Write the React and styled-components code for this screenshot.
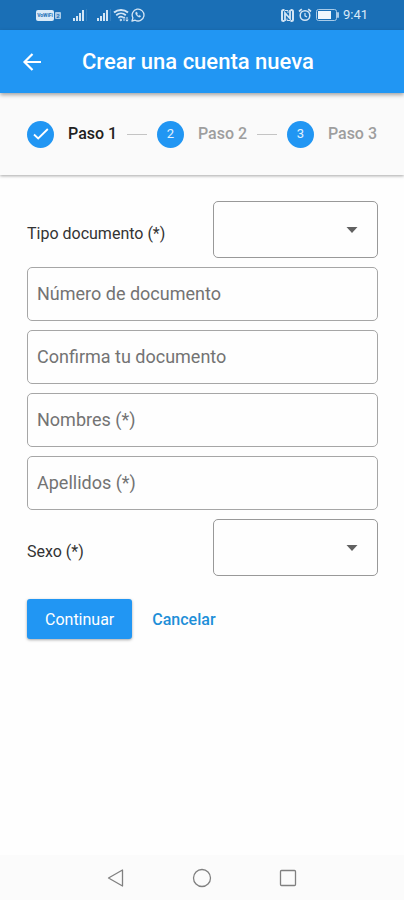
import React, { useState } from "react";
import styled, { createGlobalStyle } from "styled-components";

const steps = ["Paso 1", "Paso 2", "Paso 3"];

const fields = [
  { name: "documento", label: "Número de documento" },
  { name: "confirma", label: "Confirma tu documento" },
  { name: "nombres", label: "Nombres (*)" },
  { name: "apellidos", label: "Apellidos (*)" },
];

const Signal = () => (
  <svg width="14" height="12" viewBox="0 0 14 12" fill="#d3e5f5">
    <rect x="0" y="9" width="2" height="3" />
    <rect x="3" y="7" width="2" height="5" />
    <rect x="6" y="4" width="2" height="8" />
    <rect x="9" y="1" width="2" height="11" />
    <rect x="13" y="0" width="1" height="12" opacity="0.15" />
  </svg>
);

const Wifi = () => (
  <svg width="16" height="14" viewBox="0 0 16 14" fill="none" stroke="#d3e5f5">
    <path d="M1 4.5C5 1 11 1 15 4.5" strokeWidth="2" />
    <path d="M3.2 7.2C6 4.8 10 4.8 12.8 7.2" strokeWidth="1.8" />
    <path d="M5.4 9.8C7 8.4 8.6 8.4 10 9.4" strokeWidth="1.6" />
    <circle cx="7.8" cy="12" r="0.8" fill="#d3e5f5" />
    <path d="M11 13V9M9.8 10.2L11 8.8l1.2 1.4M14 9v4M12.8 11.8L14 13.2l1.2-1.4" />
  </svg>
);

const Whatsapp = () => (
  <svg width="14" height="14" viewBox="0 0 14 14" fill="none" stroke="#d3e5f5">
    <path
      d="M1 13l.9-3.1A5.9 5.9 0 1 1 4.2 12.2z"
      strokeWidth="1.3"
      strokeLinejoin="round"
    />
    <path
      d="M4.9 4.2c-.7.8-.2 2.2 1 3.5s2.7 1.9 3.5 1.1l.3-.7-1.3-.8-.7.6C6.9 7.5 6.4 7 6 6.2l.5-.7-.7-1.4z"
      fill="#d3e5f5"
      strokeWidth="0.4"
    />
  </svg>
);

const Nfc = () => (
  <svg width="13" height="13" viewBox="0 0 13 13" fill="none" stroke="#d3e5f5">
    <path d="M3.5 12h-1Q1 12 1 10.5v-8Q1 1 2.5 1h1" strokeWidth="2" />
    <path d="M9.5 1h1Q12 1 12 2.5v8Q12 12 10.500 12h-1" strokeWidth="2" />
    <path d="M4 12V4l5 5.5V1" strokeWidth="1.8" />
    <path d="M4 1.500h3V4M9 11.500H6V9.500" strokeWidth="1" />
  </svg>
);

const Alarm = () => (
  <svg width="14" height="14" viewBox="0 0 14 14" fill="none" stroke="#d3e5f5">
    <circle cx="7" cy="7.5" r="4.8" strokeWidth="1.5" />
    <path d="M7 5v2.8l2 1.2" strokeWidth="1.2" />
    <path d="M1 3.5L3.8 1.2M13 3.5L10.2 1.2" strokeWidth="1.7" />
  </svg>
);

const Battery = () => (
  <svg width="23" height="12" viewBox="0 0 23 12">
    <rect
      x="0.5"
      y="0.5"
      width="20"
      height="11"
      rx="2"
      fill="none"
      stroke="#a9cbe8"
    />
    <rect x="2" y="2" width="13" height="8" fill="#eef6fd" />
    <rect x="21" y="3" width="2" height="6" rx="1" fill="#a9cbe8" />
  </svg>
);

const SelectField = ({ id, label, options }) => {
  const [value, setValue] = useState("");

  return (
    <SelectRow>
      <Label htmlFor={id}>{label}</Label>
      <SelectBox>
        <Select id={id} value={value} onChange={(e) => setValue(e.target.value)}>
          <option value=""></option>
          {options.map((option) => (
            <option key={option}>{option}</option>
          ))}
        </Select>
        <Caret width="12" height="6" viewBox="0 0 12 6">
          <path d="M0.5 0h11L6 6z" fill="#616161" />
        </Caret>
      </SelectBox>
    </SelectRow>
  );
};

const App = () => {
  const [values, setValues] = useState({});

  const onChange = (e) => {
    setValues({ ...values, [e.target.name]: e.target.value });
  };

  return (
    <Page>
      <GlobalStyle />
      <StatusBar>
        <Carrier>
          <Volte>VoWiFi</Volte>
          <Sim>2</Sim>
        </Carrier>
        <Signals>
          <Signal />
          <Signal />
        </Signals>
        <Wifi />
        <Whatsapp />
        <StatusRight>
          <Nfc />
          <Alarm />
          <Battery />
          <Time>9:41</Time>
        </StatusRight>
      </StatusBar>

      <AppBar>
        <BackButton type="button" aria-label="Atrás">
          <svg width="20" height="20" viewBox="0 0 20 20" fill="none">
            <path
              d="M19 10H3M10.5 2L2.5 10l8 8"
              stroke="#fff"
              strokeWidth="2.2"
            />
          </svg>
        </BackButton>
        <Title>Crear una cuenta nueva</Title>
      </AppBar>

      <Stepper>
        {steps.map((step, i) => (
          <React.Fragment key={step}>
            {i > 0 && <Line />}
            <Step $active={i === 0}>
              <Circle>
                {i === 0 ? (
                  <svg width="16" height="12" viewBox="0 0 16 12" fill="none">
                    <path
                      d="M1 6.5L5.2 10.5L14.8 1"
                      stroke="#fff"
                      strokeWidth="1.8"
                    />
                  </svg>
                ) : (
                  i + 1
                )}
              </Circle>
              {step}
            </Step>
          </React.Fragment>
        ))}
      </Stepper>

      <Form onSubmit={(e) => e.preventDefault()}>
        <SelectField
          id="tipo"
          label="Tipo documento (*)"
          options={["DNI", "Pasaporte"]}
        />
        {fields.map(({ name, label }) => (
          <Input
            key={name}
            name={name}
            type="text"
            aria-label={label}
            placeholder={label}
            value={values[name] || ""}
            onChange={onChange}
          />
        ))}
        <SelectField
          id="sexo"
          label="Sexo (*)"
          options={["Femenino", "Masculino"]}
        />
        <Actions>
          <Button type="submit" $primary>
            Continuar
          </Button>
          <Button type="button">Cancelar</Button>
        </Actions>
      </Form>

      <NavBar>
        <NavButton type="button" aria-label="Volver">
          <svg width="18" height="20" viewBox="0 0 18 20">
            <path d="M15.5 2v16L1.5 10z" />
          </svg>
        </NavButton>
        <NavButton type="button" aria-label="Inicio">
          <svg width="20" height="20" viewBox="0 0 20 20">
            <circle cx="10" cy="10" r="8.5" />
          </svg>
        </NavButton>
        <NavButton type="button" aria-label="Recientes">
          <svg width="18" height="18" viewBox="0 0 18 18">
            <rect x="1.5" y="1.5" width="15" height="15" rx="1" />
          </svg>
        </NavButton>
      </NavBar>
    </Page>
  );
};

export default App;

const GlobalStyle = createGlobalStyle`
  * {
    box-sizing: border-box;
  }
  body {
    margin: 0;
    background: #fefefe;
    font-family: Roboto, sans-serif;
  }
  button, input, select {
    font-family: inherit;
  }
  svg {
    display: block;
    flex-shrink: 0;
  }
`;
const Page = styled.div`
  min-height: 100vh;
  display: flex;
  flex-direction: column;
`;
const StatusBar = styled.div`
  height: 30px;
  padding: 0 36px;
  display: flex;
  align-items: center;
  gap: 2px;
  background: #1a6fb6;
`;
const Carrier = styled.div`
  display: flex;
  align-items: center;
  gap: 1px;
`;
const Volte = styled.span`
  width: 18px;
  border-radius: 2px;
  background: #d9eaf8;
  color: #1a6fb6;
  font-size: 5px;
  font-weight: 700;
  line-height: 11px;
  text-align: center;
`;
const Sim = styled.span`
  width: 6px;
  border-radius: 1px;
  background: #a9cbe8;
  color: #1a6fb6;
  font-size: 6px;
  font-weight: 700;
  line-height: 7px;
  text-align: center;
`;
const Signals = styled.div`
  display: flex;
  gap: 10px;
  margin-left: 10px;
`;
const StatusRight = styled.div`
  display: flex;
  align-items: center;
  gap: 4px;
  margin-left: auto;
`;
const Time = styled.span`
  color: #d9eaf8;
  font-size: 13px;
  line-height: 16px;
`;
const AppBar = styled.header`
  position: relative;
  height: 63px;
  padding: 0 22px;
  display: flex;
  align-items: center;
  gap: 40px;
  background: #2196f3;
  box-shadow: 0 2px 4px rgba(0, 0, 0, 0.35);
`;
const BackButton = styled.button`
  padding: 0;
  border: none;
  background: none;
  cursor: pointer;
`;
const Title = styled.h1`
  margin: 0;
  color: #fff;
  font-size: 22px;
  font-weight: 500;
  line-height: 28px;
  white-space: nowrap;
`;
const Stepper = styled.div`
  height: 82px;
  padding: 0 27px;
  display: flex;
  align-items: center;
  background: #fafafa;
  box-shadow: 0 1px 3px rgba(0, 0, 0, 0.35);
`;
const Step = styled.div`
  display: flex;
  align-items: center;
  gap: 14px;
  color: ${({ $active }) => ($active ? "#212121" : "#9e9e9e")};
  font-size: 16px;
  font-weight: 500;
  line-height: 20px;
  white-space: nowrap;
`;
const Circle = styled.span`
  width: 27px;
  height: 27px;
  display: flex;
  align-items: center;
  justify-content: center;
  border-radius: 50%;
  background: #2196f3;
  color: #e3f2fd;
  font-size: 13px;
  font-weight: 400;
`;
const Line = styled.span`
  flex: 1;
  height: 1px;
  margin: 0 10px;
  background: #c4c4c4;
`;
const Form = styled.form`
  flex: 1;
  padding: 26px 26px 26px 27px;
  display: flex;
  flex-direction: column;
  gap: 9px;
`;
const SelectRow = styled.div`
  display: flex;
  align-items: center;
  justify-content: space-between;
`;
const Label = styled.label`
  padding-top: 8px;
  color: #333;
  font-size: 16px;
  line-height: 20px;
`;
const SelectBox = styled.div`
  position: relative;
  width: 47%;
`;
const Select = styled.select`
  display: block;
  width: 100%;
  height: 57px;
  padding: 0 40px 0 10px;
  appearance: none;
  border: 1px solid #999;
  border-radius: 5px;
  background: transparent;
  color: #333;
  font-size: 18px;
`;
const Caret = styled.svg`
  position: absolute;
  top: 26px;
  right: 20px;
  pointer-events: none;
`;
const Input = styled.input`
  width: 100%;
  height: 54px;
  padding: 0 9px 2px;
  border: 1px solid #a6a6a6;
  border-radius: 5px;
  background: transparent;
  color: #333;
  font-size: 18px;

  &::placeholder {
    color: #737373;
    opacity: 1;
  }
`;
const Actions = styled.div`
  display: flex;
  gap: 2px;
  padding-top: 14px;
`;
const Button = styled.button`
  height: 40px;
  padding: 0 18px;
  border: none;
  border-radius: 3px;
  background: ${({ $primary }) => ($primary ? "#2196f3" : "transparent")};
  box-shadow: ${({ $primary }) =>
    $primary ? "0 1px 3px rgba(0, 0, 0, 0.35)" : "none"};
  color: ${({ $primary }) => ($primary ? "#fff" : "#1e8fd8")};
  font-size: 16px;
  font-weight: ${({ $primary }) => ($primary ? 400 : 500)};
  cursor: pointer;
`;
const NavBar = styled.nav`
  height: 45px;
  display: flex;
  align-items: center;
  justify-content: center;
  gap: 66px;
  background: #fbfbfb;
`;
const NavButton = styled.button`
  width: 20px;
  padding: 0;
  display: flex;
  justify-content: center;
  border: none;
  background: none;
  cursor: pointer;

  svg {
    fill: none;
    stroke: #808080;
    stroke-width: 1.3;
    stroke-linejoin: round;
  }
`;
